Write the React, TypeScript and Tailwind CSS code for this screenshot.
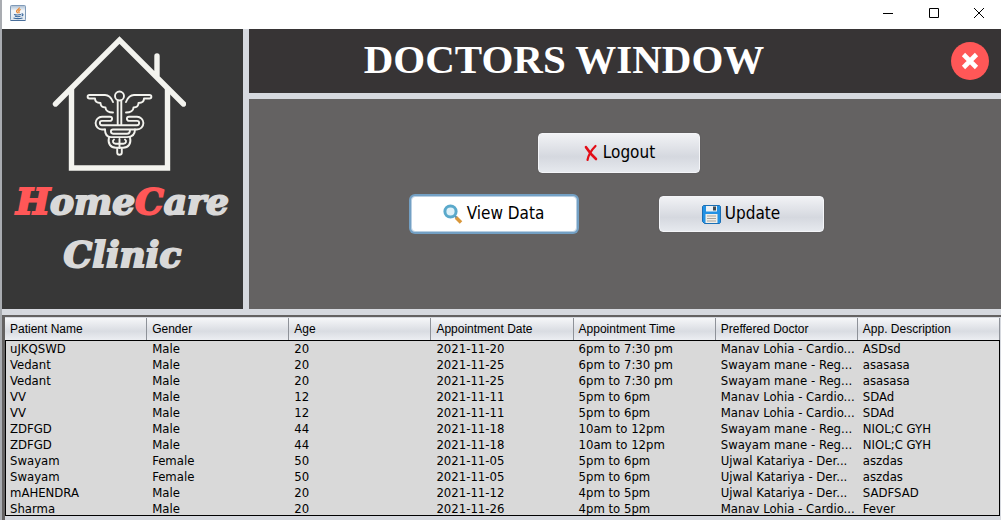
import React from "react";

const columns = [
  "Patient Name",
  "Gender",
  "Age",
  "Appointment Date",
  "Appointment Time",
  "Preffered Doctor",
  "App. Description",
];

const rows = [
  ["uJKQSWD", "Male", "20", "2021-11-20", "6pm to 7:30 pm", "Manav Lohia - Cardio...", "ASDsd"],
  ["Vedant", "Male", "20", "2021-11-25", "6pm to 7:30 pm", "Swayam mane - Reg...", "asasasa"],
  ["Vedant", "Male", "20", "2021-11-25", "6pm to 7:30 pm", "Swayam mane - Reg...", "asasasa"],
  ["VV", "Male", "12", "2021-11-11", "5pm to 6pm", "Manav Lohia - Cardio...", "SDAd"],
  ["VV", "Male", "12", "2021-11-11", "5pm to 6pm", "Manav Lohia - Cardio...", "SDAd"],
  ["ZDFGD", "Male", "44", "2021-11-18", "10am to 12pm", "Swayam mane - Reg...", "NIOL;C GYH"],
  ["ZDFGD", "Male", "44", "2021-11-18", "10am to 12pm", "Swayam mane - Reg...", "NIOL;C GYH"],
  ["Swayam", "Female", "50", "2021-11-05", "5pm to 6pm", "Ujwal Katariya - Der...", "aszdas"],
  ["Swayam", "Female", "50", "2021-11-05", "5pm to 6pm", "Ujwal Katariya - Der...", "aszdas"],
  ["mAHENDRA", "Male", "20", "2021-11-12", "4pm to 5pm", "Ujwal Katariya - Der...", "SADFSAD"],
  ["Sharma", "Male", "20", "2021-11-26", "4pm to 5pm", "Manav Lohia - Cardio...", "Fever"],
];

function JavaIcon() {
  return (
    <svg className="size-4" viewBox="0 0 16 16" fill="none" aria-hidden="true">
      <defs>
        <linearGradient id="java-bg" x1="0" y1="0" x2="0" y2="1">
          <stop offset="0" stopColor="#a9bdd2" />
          <stop offset="0.35" stopColor="#f4f7fa" />
          <stop offset="1" stopColor="#dfe7ef" />
        </linearGradient>
      </defs>
      <rect x="0.5" y="0.5" width="15" height="15" rx="1" fill="url(#java-bg)" stroke="#7f9ab8" />
      <path d="M0.5 15.5h15" stroke="#4a6f9b" />
      <path d="M9.3 2.5c.4 1.600-3 2.200-2.700 3.800.1.700 1 1 .9 1.900M10.700 4.500c-1.700.6-2.300 1.300-1.700 2.300.3.500 0 1-.4 1.400" stroke="#e8852f" strokeWidth="1.300" />
      <path d="M4 9.500c2 .6 5 .5 7 0M5 11.300c1.500.5 4 .5 5.500 0M3.500 13c2.500.8 6.500.8 9 0M11.500 9c1.800-.6 2 1.200.2 2" stroke="#3c6a9e" strokeWidth="1.200" />
    </svg>
  );
}

function HouseLogo() {
  return (
    <svg className="h-[136px] w-[134px]" viewBox="52 36 134 136" fill="none" stroke="#f3f3ee" strokeLinecap="round" aria-hidden="true">
      <path d="M55.500 104 119.500 40 183.500 104M157 56v20" strokeWidth="5.400" />
      <path d="M71.500 87v81h96V87" strokeWidth="5.400" strokeLinecap="butt" />
      <g strokeWidth="1.900" strokeLinejoin="round">
        <circle cx="119.500" cy="96" r="4.500" />
        <path d="M117.700 100.500v24M121.300 100.500v24M119.500 139v9M117.200 149v3.500a2.300 2.300 0 0 0 4.600 0V149" />
        <path d="M113 102c-2-5-4-7-8-7H89.500c-2.500 0-2.500 3.500 0 3.500H95c0 3 2 4.500 5.500 4.500 0 3 2 4.500 5 4.500 0 3 3 5 7.500 5" />
        <path d="M126 102c2-5 4-7 8-7h15.500c2.500 0 2.500 3.500 0 3.500H144c0 3-2 4.500-5.500 4.500 0 3-2 4.500-5 4.500 0 3-3 5-7.500 5" />
        <path d="M105 129.500h-3a6.400 6.400 0 0 1 0-12.800h8a2.100 2.100 0 0 1 0 4.200h-8a2.100 2.100 0 0 0 0 4.300h35a2.100 2.100 0 0 0 0-4.300h-8a2.100 2.100 0 0 1 0-4.200h8a6.400 6.400 0 0 1 0 12.800h-24a2.100 2.100 0 0 0 0 4.200h14c2 0 3-1.500 3-4" />
        <path d="M105 129.500c0 5 2 7.600 6 7.600h16c5 0 8-2.600 8-7.600" />
        <path d="M109 137.500c-1.500 6 1.500 10.200 7 10.200h7c5.500 0 8.500-4.200 7-10.200" />
        <path d="M114 139.500c-2 1.500-1 4.200 1.500 4.200h8c2.500 0 3.500-2.700 1.500-4.200" />
      </g>
    </svg>
  );
}

function CrossIcon() {
  return (
    <svg className="h-[18px] w-4" viewBox="0 0 16 18" fill="none" stroke="#e30d17" strokeLinecap="round" aria-hidden="true">
      <path d="M3 3.200C5.500 7 8 10.500 13 15" strokeWidth="2.600" />
      <path d="M12.500 2C8.500 6 5.500 10.500 4.500 16" strokeWidth="2.200" />
    </svg>
  );
}

function SearchIcon() {
  return (
    <svg className="size-5" viewBox="0 0 20 20" fill="none" aria-hidden="true">
      <path d="m13 13.500 5 5" stroke="#d9973a" strokeWidth="3.600" />
      <path d="m11 11 2.500 2.500" stroke="#6b8794" strokeWidth="2" />
      <circle cx="7.500" cy="7.500" r="5.600" fill="#dff1f8" stroke="#5aa9cb" strokeWidth="3" />
    </svg>
  );
}

function SaveIcon() {
  return (
    <svg className="size-[19px]" viewBox="0 0 19 19" aria-hidden="true">
      <path d="M1.500.5h16l1 1v16l-1 1h-15l-2-2v-15z" fill="#2391e3" stroke="#1b6fb5" />
      <path d="M4 1h11v5.500H4z" fill="#eef1f3" />
      <path d="M11 1.500h3v4h-3z" fill="#3f4a52" />
      <path d="M3.500 9h12v9h-12z" fill="#f1eee8" />
      <path d="M5 11h9M5 13.500h9M5 16h9" stroke="#a7a39b" />
    </svg>
  );
}

const buttonBase =
  "flex items-center justify-center gap-1 rounded border border-[#f4f5f8] bg-linear-to-b from-[#f1f2f5] via-[#d5d8df] via-60% to-[#e6e9ee] text-black shadow-[0_0_1px_#4b4b4f]";

export default function App() {
  return (
    <div className="flex h-screen min-h-fit flex-col border-l-2 border-[#a9acb1] bg-[#d6d9df] font-['DejaVu_Sans_Condensed','DejaVu_Sans',sans-serif] text-black">
      <header className="flex h-[29px] shrink-0 items-center justify-between bg-white pl-2">
        <div className="pb-[3px]">
          <JavaIcon />
        </div>
        <div className="flex h-full pb-[3px]">
          <button type="button" aria-label="Minimize" className="flex w-[46px] items-center justify-center">
            <svg className="size-[10px]" viewBox="0 0 10 10" stroke="#000" aria-hidden="true">
              <path d="M0 5.500h10" />
            </svg>
          </button>
          <button type="button" aria-label="Maximize" className="flex w-[46px] items-center justify-center">
            <svg className="size-[10px]" viewBox="0 0 10 10" fill="none" stroke="#000" aria-hidden="true">
              <path d="M.5.5h9v9h-9z" />
            </svg>
          </button>
          <button type="button" aria-label="Close window" className="flex w-[44px] items-center justify-center">
            <svg className="size-[10px]" viewBox="0 0 10 10" stroke="#000" aria-hidden="true">
              <path d="m0 0 10 10M10 0 0 10" />
            </svg>
          </button>
        </div>
      </header>

      <div className="flex h-[280px] shrink-0 gap-[6px]">
        <aside className="flex w-[241px] shrink-0 flex-col items-center bg-[#373737] pt-[7px]">
          <div className="pr-2">
            <HouseLogo />
          </div>
          <div className="pt-[3px] text-center font-['DejaVu_Serif',serif] text-[36px] leading-[53px] font-bold text-[#d9d9d9] italic [-webkit-text-stroke:2px_currentColor]">
            <div>
              <span className="text-[#ff5757]">H</span>ome<span className="text-[#ff5757]">C</span>are
            </div>
            <div>Clinic</div>
          </div>
        </aside>

        <div className="flex min-w-0 flex-1 flex-col gap-[6px]">
          <div className="flex h-16 items-center bg-[#373435] pr-3">
            <h1 className="flex-1 pr-[72px] pb-1 text-center font-['Liberation_Serif',serif] text-[41px] leading-none font-bold text-white">
              DOCTORS WINDOW
            </h1>
            <button type="button" aria-label="Close" className="flex size-[38px] items-center justify-center rounded-full bg-[#ff5757]">
              <svg className="size-[18px]" viewBox="0 0 18 18" stroke="#fff" strokeWidth="4.600" aria-hidden="true">
                <path d="m2.500 2.500 13 13M15.500 2.500l-13 13" />
              </svg>
            </button>
          </div>

          <main className="flex flex-1 flex-col items-center bg-[#646262] pt-[34px] pr-3">
            <button type="button" className={`${buttonBase} h-10 w-[162px] text-[17px]`}>
              <CrossIcon />
              Logout
            </button>
            <div className="flex items-center gap-[82px] pt-[23px] pr-1">
              <button
                type="button"
                className="flex h-[36px] w-[166px] items-center justify-center gap-1 rounded border border-[#b9cfe2] bg-white text-[17px] text-black ring-2 ring-[#73a0c4]"
              >
                <SearchIcon />
                View Data
              </button>
              <button type="button" className={`${buttonBase} h-[36px] w-[165px] text-[17px]`}>
                <SaveIcon />
                Update
              </button>
            </div>
          </main>
        </div>
      </div>

      <section className="mt-[6px] flex-1 border-t-2 border-l-3 border-[#646262] pt-px pr-px">
        <table className="w-full table-fixed border-separate border-spacing-0">
          <thead>
            <tr className="h-[22px] bg-linear-to-b from-[#f6f7f9] via-[#d9dce2] via-60% to-[#eceef2]">
              {columns.map((name) => (
                <th
                  key={name}
                  scope="col"
                  className="border-r border-[#8e9299] px-[5px] py-0 text-left font-['Liberation_Sans',sans-serif] text-[12px] leading-[21px] font-normal whitespace-nowrap"
                >
                  {name}
                </th>
              ))}
            </tr>
          </thead>
          <tbody className="bg-[#d9d9d9] outline outline-1 -outline-offset-1 outline-black">
            {rows.map((row, index) => (
              <tr key={index}>
                {row.map((cell, column) => (
                  <td key={column} className="h-4 overflow-hidden px-[5px] pt-px pb-0 text-[13px] leading-[15px] whitespace-nowrap">
                    {cell}
                  </td>
                ))}
              </tr>
            ))}
          </tbody>
        </table>
      </section>
    </div>
  );
}
